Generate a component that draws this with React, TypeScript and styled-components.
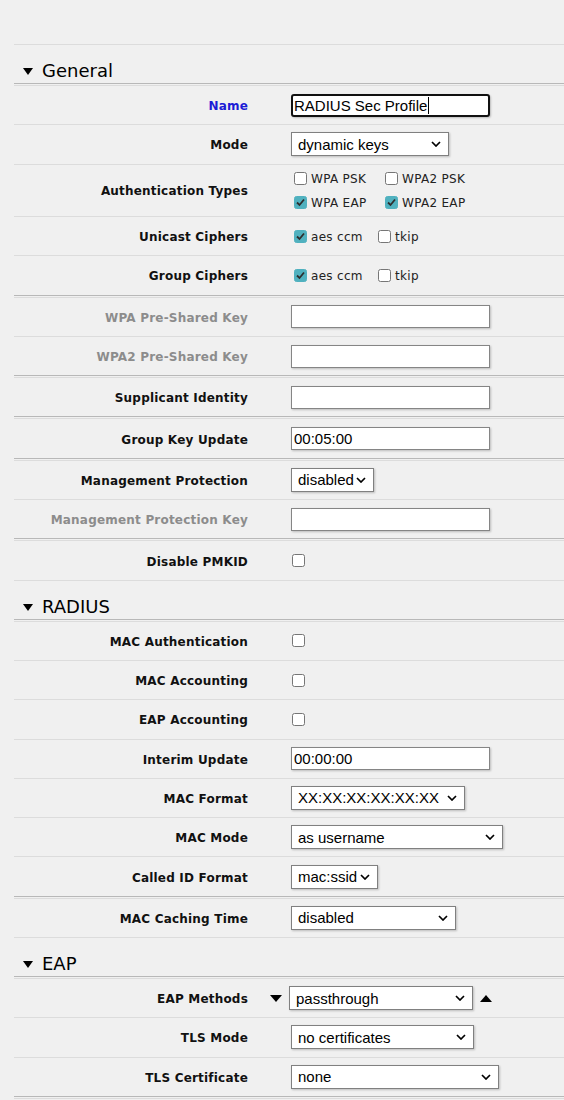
import React from "react";
import styled, { createGlobalStyle } from "styled-components";

const GlobalStyle = createGlobalStyle`
  html, body {
    margin: 0;
    padding: 0;
    background: #f0f0f0;
  }
  body {
    font-family: "DejaVu Sans", Verdana, sans-serif;
  }
`;

const LIGHT = "#dcdcdc";
const DARK = "#b8b8b8";

type Tone = "normal" | "muted" | "required";

const Page = styled.div`
  width: 564px;
  height: 1100px;
  overflow: hidden;
  padding-top: 44px;
  box-sizing: border-box;
`;

const Form = styled.div`
  margin-left: 14px;
  border-top: 1px solid ${LIGHT};
`;

const SectionHeader = styled.div`
  display: flex;
  align-items: center;
  gap: 9px;
  padding: 15px 0 1px 9px;
  font-size: 18px;
  line-height: 22px;
  color: #000;
  border-bottom: 1px solid ${DARK};
`;

const Caret = styled.span<{ $up?: boolean }>`
  width: 0;
  height: 0;
  border-left: 6px solid transparent;
  border-right: 6px solid transparent;
  ${(p) =>
    p.$up ? "border-bottom: 7px solid #000;" : "border-top: 7px solid #000;"}
`;

const HeaderCaret = styled(Caret)`
  border-left-width: 5.5px;
  border-right-width: 5.5px;
  margin-top: 1px;
`;

const Body = styled.div`
  margin-top: 1px;
  border-top: 1px solid ${LIGHT};
`;

const Row = styled.div<{ $tall?: boolean }>`
  display: flex;
  align-items: center;
  height: ${(p) => (p.$tall ? "51.4px" : "38.3px")};
  border-bottom: 1px solid ${LIGHT};
`;

const Group = styled.div`
  & + & {
    margin-top: 1px;
    border-top: 1px solid ${LIGHT};
  }
  &:not(:last-child) > ${Row}:last-child {
    border-bottom-color: ${DARK};
  }
`;

const Label = styled.div<{ $tone?: Tone }>`
  width: 234px;
  flex: none;
  padding-top: 2px;
  text-align: right;
  font-weight: bold;
  font-size: 12px;
  letter-spacing: 0.2px;
  color: ${(p) =>
    p.$tone === "muted" ? "#8c8c8c" : p.$tone === "required" ? "#1c1cd6" : "#111"};
`;

const Control = styled.div<{ $arrows?: boolean }>`
  display: flex;
  align-items: center;
  gap: ${(p) => (p.$arrows ? "7px" : "0")};
  padding-left: ${(p) => (p.$arrows ? "22px" : "43px")};
`;

const Field = styled.div<{ $focused?: boolean }>`
  width: 199px;
  height: 23px;
  box-sizing: border-box;
  display: flex;
  align-items: center;
  padding-left: ${(p) => (p.$focused ? "1px" : "2px")};
  background: #fff;
  border: ${(p) => (p.$focused ? "2px solid #111" : "1px solid #858585")};
  border-radius: ${(p) => (p.$focused ? "3px" : "0")};
  box-shadow: 1px 1px 2px rgba(0, 0, 0, 0.22);
  font-family: "Liberation Sans", Arial, sans-serif;
  font-size: 15px;
  color: #000;
  white-space: nowrap;
`;

const TextCursor = styled.span`
  display: inline-block;
  width: 1px;
  height: 17px;
  background: #000;
  margin-left: 1px;
`;

const SelectBox = styled.div<{ $w: number }>`
  width: ${(p) => p.$w}px;
  height: 24px;
  box-sizing: border-box;
  display: flex;
  align-items: center;
  justify-content: space-between;
  padding: 0 7px 0 6px;
  background: #fff;
  border: 1px solid #808080;
  box-shadow: 1px 1px 2px rgba(0, 0, 0, 0.22);
  font-family: "Liberation Sans", Arial, sans-serif;
  font-size: 15px;
  color: #000;
  white-space: nowrap;
`;

const CheckGrid = styled.div<{ $col: number }>`
  display: grid;
  grid-template-columns: ${(p) => p.$col}px auto;
  row-gap: 9px;
  margin-left: 3px;
`;

const CheckItem = styled.label`
  display: inline-flex;
  align-items: center;
  gap: 4px;
  font-size: 12px;
  letter-spacing: 0.3px;
  color: #222;
`;

const CheckText = styled.span`
  padding-top: 1px;
`;

const Box = styled.span<{ $on?: boolean }>`
  width: 13px;
  height: 13px;
  box-sizing: border-box;
  flex: none;
  display: inline-flex;
  align-items: center;
  justify-content: center;
  border-radius: 2.5px;
  background: ${(p) => (p.$on ? "#50b1bf" : "#fff")};
  border: 1px solid ${(p) => (p.$on ? "#50b1bf" : "#767676")};
`;

const LoneBox = styled(Box)`
  margin-left: 1px;
`;

const Chevron = () => (
  <svg width="10" height="6" viewBox="0 0 10 6">
    <path d="M1 1 L5 5 L9 1" fill="none" stroke="#000" strokeWidth="1.7" />
  </svg>
);

const Tick = () => (
  <svg width="11" height="11" viewBox="0 0 11 11">
    <path d="M2 5.5 L4.5 8 L9 2.5" fill="none" stroke="#2e2e2e" strokeWidth="1.8" />
  </svg>
);

const Check = ({ on, children }: { on?: boolean; children: React.ReactNode }) => (
  <CheckItem>
    <Box $on={on}>{on && <Tick />}</Box>
    <CheckText>{children}</CheckText>
  </CheckItem>
);

const Select = ({ w, value }: { w: number; value: string }) => (
  <SelectBox $w={w}>
    <span>{value}</span>
    <Chevron />
  </SelectBox>
);

type Item = {
  label: string;
  tone?: Tone;
  tall?: boolean;
  arrows?: boolean;
  control: React.ReactNode;
};

type Section = { title: string; groups: Item[][] };

const sections: Section[] = [
  {
    title: "General",
    groups: [
      [
        {
          label: "Name",
          tone: "required",
          control: (
            <Field $focused>
              RADIUS Sec Profile
              <TextCursor />
            </Field>
          ),
        },
        { label: "Mode", control: <Select w={158} value="dynamic keys" /> },
        {
          label: "Authentication Types",
          tall: true,
          control: (
            <CheckGrid $col={91}>
              <Check>WPA PSK</Check>
              <Check>WPA2 PSK</Check>
              <Check on>WPA EAP</Check>
              <Check on>WPA2 EAP</Check>
            </CheckGrid>
          ),
        },
        {
          label: "Unicast Ciphers",
          control: (
            <CheckGrid $col={84}>
              <Check on>aes ccm</Check>
              <Check>tkip</Check>
            </CheckGrid>
          ),
        },
        {
          label: "Group Ciphers",
          control: (
            <CheckGrid $col={84}>
              <Check on>aes ccm</Check>
              <Check>tkip</Check>
            </CheckGrid>
          ),
        },
      ],
      [
        { label: "WPA Pre-Shared Key", tone: "muted", control: <Field /> },
        { label: "WPA2 Pre-Shared Key", tone: "muted", control: <Field /> },
      ],
      [{ label: "Supplicant Identity", control: <Field /> }],
      [{ label: "Group Key Update", control: <Field>00:05:00</Field> }],
      [
        { label: "Management Protection", control: <Select w={83} value="disabled" /> },
        { label: "Management Protection Key", tone: "muted", control: <Field /> },
      ],
      [{ label: "Disable PMKID", control: <LoneBox /> }],
    ],
  },
  {
    title: "RADIUS",
    groups: [
      [
        { label: "MAC Authentication", control: <LoneBox /> },
        { label: "MAC Accounting", control: <LoneBox /> },
        { label: "EAP Accounting", control: <LoneBox /> },
        { label: "Interim Update", control: <Field>00:00:00</Field> },
        { label: "MAC Format", control: <Select w={174} value="XX:XX:XX:XX:XX:XX" /> },
        { label: "MAC Mode", control: <Select w={212} value="as username" /> },
        { label: "Called ID Format", control: <Select w={87} value="mac:ssid" /> },
      ],
      [{ label: "MAC Caching Time", control: <Select w={165} value="disabled" /> }],
    ],
  },
  {
    title: "EAP",
    groups: [
      [
        {
          label: "EAP Methods",
          arrows: true,
          control: (
            <>
              <Caret />
              <Select w={184} value="passthrough" />
              <Caret $up />
            </>
          ),
        },
        { label: "TLS Mode", control: <Select w={183} value="no certificates" /> },
        { label: "TLS Certificate", control: <Select w={208} value="none" /> },
      ],
      [],
    ],
  },
];

export default function App() {
  return (
    <Page>
      <GlobalStyle />
      <Form>
        {sections.map((s) => (
          <div key={s.title}>
            <SectionHeader>
              <HeaderCaret />
              {s.title}
            </SectionHeader>
            <Body>
              {s.groups.map((g, i) => (
                <Group key={i}>
                  {g.map((it) => (
                    <Row key={it.label} $tall={it.tall}>
                      <Label $tone={it.tone}>{it.label}</Label>
                      <Control $arrows={it.arrows}>{it.control}</Control>
                    </Row>
                  ))}
                </Group>
              ))}
            </Body>
          </div>
        ))}
      </Form>
    </Page>
  );
}
